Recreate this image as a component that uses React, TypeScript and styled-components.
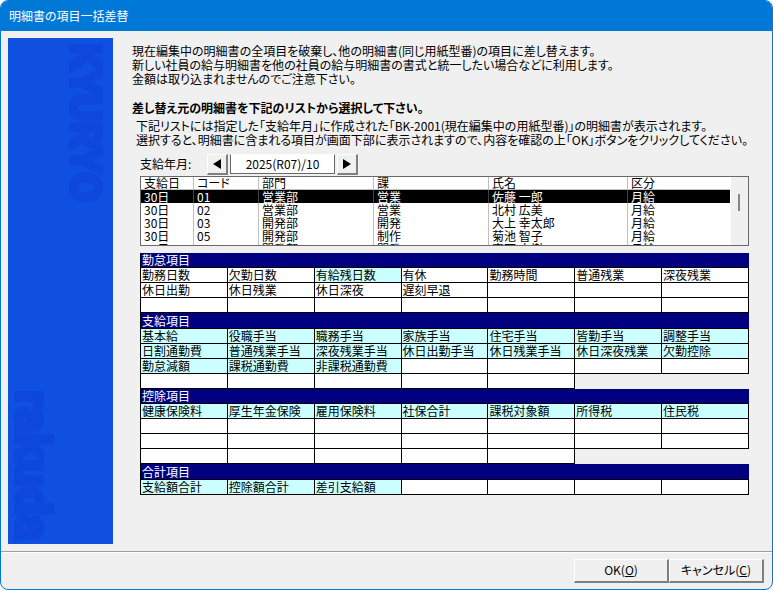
import React, { useState } from "react";
import styled, { createGlobalStyle } from "styled-components";

const GlobalStyle = createGlobalStyle`
  * { box-sizing: border-box; }
  body { margin: 0; background: #fff; }
  body, button, input, table {
    font-family: "Noto Sans CJK JP", "Liberation Sans", sans-serif;
    font-size: 12px;
    line-height: 14px;
    font-feature-settings: "palt";
    color: #000;
  }
`;

const Dialog = styled.main`
  min-height: 100vh;
  display: flex;
  flex-direction: column;
  border: 1px solid #0078d7;
  border-radius: 8px;
  background: #f0f0f0;
  overflow: hidden;
`;

const TitleBar = styled.h1`
  margin: 0;
  padding: 0 8px;
  font-size: 12px;
  font-weight: 400;
  line-height: 30px;
  color: #fff;
  background: #0078d7;
`;

const Body = styled.div`
  flex: 1;
  display: flex;
  padding: 7px;
  gap: 19px;
`;

const Banner = styled.aside`
  flex: none;
  width: 105px;
  display: flex;
  flex-direction: column;
  justify-content: space-between;
  background: #0f50e1;
`;

const BannerWord = styled.span<{ $side: "start" | "end" }>`
  align-self: flex-${(p) => p.$side};
  padding: ${(p) => (p.$side === "end" ? "5px 4px 0 0" : "0 0 3px")};
  writing-mode: vertical-rl;
  font-family: "Liberation Sans Narrow", "Roboto", sans-serif;
  font-size: ${(p) => (p.$side === "end" ? 42 : 49)}px;
  font-weight: 700;
  line-height: 48px;
  color: #0d47dc;
  -webkit-text-stroke: 4px #0d47dc;
`;

const Content = styled.div`
  flex: 1;
  min-width: 0;
  padding: 6px 16px 0 0;
`;

const Paragraph = styled.p`
  margin: 0;
  white-space: nowrap;
`;

const Heading = styled.h2`
  margin: 15px 0 4px;
  font-size: 12px;
  font-weight: 700;
  line-height: 14px;
`;

const Indented = styled.div`
  padding-left: 8px;
`;

const Note = styled(Paragraph)`
  margin-left: -4px;
`;

const MonthRow = styled.div`
  display: flex;
  align-items: center;
  height: 22px;
  margin: 6px 0 1px;
`;

const MonthLabel = styled.label`
  width: 67px;
`;

const Raised = styled.button`
  padding: 0;
  border: solid;
  border-width: 1px 2px 2px 1px;
  border-color: #fff #808080 #808080 #fff;
  background: #f0f0f0;
`;

const ArrowButton = styled(Raised)`
  width: 21px;
  height: 21px;
  display: grid;
  place-items: center;
`;

const MonthInput = styled.input`
  width: 105px;
  height: 20px;
  margin: 0 2px;
  padding: 0 0 2px;
  border: 1px solid #696969;
  border-top-color: #fff;
  background: #fff;
  text-align: center;
`;

const ListBox = styled.div`
  display: flex;
  height: 70px;
  border: 1px solid #696969;
  background: #fff;
  overflow: hidden;
`;

const ListTable = styled.table`
  flex: 1;
  align-self: flex-start;
  table-layout: fixed;
  border-collapse: separate;
  border-spacing: 0;
`;

const Col = styled.col<{ $w?: number }>`
  width: ${(p) => (p.$w ? `${p.$w}px` : "auto")};
`;

const ListHead = styled.th`
  height: 13px;
  padding: 0 3px;
  border: solid #c0c0c0;
  border-width: 0 1px 1px 0;
  font-weight: 400;
  line-height: 12px;
  text-align: left;
  &:last-child { border-right: 0; }
`;

const ListRow = styled.tr<{ $selected: boolean }>`
  cursor: default;
  color: ${(p) => (p.$selected ? "#fff" : "#000")};
  background: ${(p) => (p.$selected ? "#000" : "#fff")};
  td { border-right: 1px solid ${(p) => (p.$selected ? "#404040" : "#c0c0c0")}; }
  td:last-child { border-right: 0; }
`;

const ListCell = styled.td`
  height: 13px;
  padding: 0 3px;
  line-height: 13px;
  white-space: nowrap;
`;

const ScrollTrack = styled.div`
  width: 17px;
  padding: 17px 7px;
  margin-left: 1px;
  background: #f0f0f0;
`;

const ScrollThumb = styled.div`
  width: 2px;
  height: 17px;
  background: #858585;
`;

const Sections = styled.div`
  margin-top: 7px;
`;

const ItemTable = styled.table`
  width: 100%;
  table-layout: fixed;
  border-collapse: separate;
  border-spacing: 0;
  border-left: 1px solid #000;
  &:nth-of-type(even) th { height: 16px; }
`;

const SectionTitle = styled.th`
  height: 15px;
  padding: 0 1px;
  border-bottom: 1px solid #000;
  background: #000080;
  color: #fff;
  font-weight: 400;
  line-height: 14px;
  text-align: left;
`;

const Item = styled.td<{ $on: boolean }>`
  height: 15px;
  padding: 0 1px;
  border: solid #000;
  border-width: 0 1px 1px 0;
  background: ${(p) => (p.$on ? "#ccffff" : "#fff")};
  line-height: 14px;
  white-space: nowrap;
`;

const Footer = styled.footer`
  display: flex;
  justify-content: flex-end;
  padding: 7px 8px 6px;
  border-top: 1px solid #a0a0a0;
  box-shadow: inset 0 1px #fff;
`;

const ActionButton = styled(Raised)`
  width: 95px;
  height: 24px;
  padding-bottom: 2px;
`;

const columns = [
  { label: "支給日", w: 53 },
  { label: "コード", w: 65 },
  { label: "部門", w: 115 },
  { label: "課", w: 115 },
  { label: "氏名", w: 139 },
  { label: "区分" },
];

const people = [
  ["30日", "01", "営業部", "営業", "佐藤 一郎", "月給"],
  ["30日", "02", "営業部", "営業", "北村 広美", "月給"],
  ["30日", "03", "開発部", "開発", "大上 幸太郎", "月給"],
  ["30日", "05", "開発部", "制作", "菊池 智子", "月給"],
  ["30日", "06", "開発部", "開発", "安西 大樹", "月給"],
];

/* An entry starting with "*" is shown on the highlighted background. */
const sections = [
  {
    title: "勤怠項目",
    rows: [
      ["勤務日数", "欠勤日数", "*有給残日数", "有休", "勤務時間", "普通残業", "深夜残業"],
      ["休日出勤", "休日残業", "休日深夜", "遅刻早退", "", "", ""],
      ["", "", "", "", "", "", ""],
    ],
  },
  {
    title: "支給項目",
    rows: [
      ["*基本給", "*役職手当", "*職務手当", "*家族手当", "*住宅手当", "*皆勤手当", "*調整手当"],
      ["*日割通勤費", "*普通残業手当", "*深夜残業手当", "*休日出勤手当", "*休日残業手当", "*休日深夜残業", "*欠勤控除"],
      ["*勤怠減額", "*課税通勤費", "*非課税通勤費", "", "", "", ""],
      ["", "", "", "", ""],
    ],
  },
  {
    title: "控除項目",
    rows: [
      ["*健康保険料", "*厚生年金保険", "*雇用保険料", "*社保合計", "*課税対象額", "*所得税", "*住民税"],
      ["", "", "", "", "", "", ""],
      ["", "", "", "", "", "", ""],
      ["", "", "", "", ""],
    ],
  },
  {
    title: "合計項目",
    rows: [["*支給額合計", "*控除額合計", "*差引支給額", "", "", "", ""]],
  },
];

function Arrow({ left }: { left?: boolean }) {
  return (
    <svg width="10" height="10" viewBox="0 0 10 10" aria-hidden="true">
      <path d={left ? "M9 0v10L1 5z" : "M1 0v10l8-5z"} />
    </svg>
  );
}

function monthText(index: number) {
  const year = Math.floor(index / 12);
  const month = String((index % 12) + 1).padStart(2, "0");
  return `${year}(R${String(year - 2018).padStart(2, "0")})/${month}`;
}

export default function App() {
  const [month, setMonth] = useState(2025 * 12 + 9);
  const [selected, setSelected] = useState(0);

  return (
    <>
      <GlobalStyle />
      <Dialog lang="ja">
        <TitleBar>明細書の項目一括差替</TitleBar>
        <Body>
          <Banner>
            <BannerWord $side="end">KYURYO</BannerWord>
            <BannerWord $side="start">rakuda</BannerWord>
          </Banner>
          <Content>
            <Paragraph>現在編集中の明細書の全項目を破棄し、他の明細書(同じ用紙型番)の項目に差し替えます。</Paragraph>
            <Paragraph>新しい社員の給与明細書を他の社員の給与明細書の書式と統一したい場合などに利用します。</Paragraph>
            <Paragraph>金額は取り込まれませんのでご注意下さい。</Paragraph>
            <Heading>差し替え元の明細書を下記のリストから選択して下さい。</Heading>
            <Indented>
              <Note>下記リストには指定した「支給年月」に作成された「BK-2001(現在編集中の用紙型番)」の明細書が表示されます。</Note>
              <Note>選択すると、明細書に含まれる項目が画面下部に表示されますので、内容を確認の上「OK」ボタンをクリックしてください。</Note>
              <MonthRow>
                <MonthLabel htmlFor="month">支給年月:</MonthLabel>
                <ArrowButton type="button" aria-label="前の月" onClick={() => setMonth(month - 1)}>
                  <Arrow left />
                </ArrowButton>
                <MonthInput id="month" readOnly value={monthText(month)} />
                <ArrowButton type="button" aria-label="次の月" onClick={() => setMonth(month + 1)}>
                  <Arrow />
                </ArrowButton>
              </MonthRow>
              <ListBox>
                <ListTable>
                  <colgroup>
                    {columns.map((c) => <Col key={c.label} $w={c.w} />)}
                  </colgroup>
                  <thead>
                    <tr>
                      {columns.map((c) => <ListHead key={c.label} scope="col">{c.label}</ListHead>)}
                    </tr>
                  </thead>
                  <tbody>
                    {people.map((person, i) => (
                      <ListRow key={person[1]} $selected={i === selected} onClick={() => setSelected(i)}>
                        {person.map((value, j) => <ListCell key={j}>{value}</ListCell>)}
                      </ListRow>
                    ))}
                  </tbody>
                </ListTable>
                <ScrollTrack><ScrollThumb /></ScrollTrack>
              </ListBox>
              <Sections>
                {sections.map((section) => (
                  <ItemTable key={section.title}>
                    <thead>
                      <tr><SectionTitle colSpan={7}>{section.title}</SectionTitle></tr>
                    </thead>
                    <tbody>
                      {section.rows.map((row, i) => (
                        <tr key={i}>
                          {row.map((item, j) => (
                            <Item key={j} $on={item.startsWith("*")}>{item.replace("*", "")}</Item>
                          ))}
                        </tr>
                      ))}
                    </tbody>
                  </ItemTable>
                ))}
              </Sections>
            </Indented>
          </Content>
        </Body>
        <Footer>
          <ActionButton type="button">OK(<u>O</u>)</ActionButton>
          <ActionButton type="button">キャンセル(<u>C</u>)</ActionButton>
        </Footer>
      </Dialog>
    </>
  );
}
